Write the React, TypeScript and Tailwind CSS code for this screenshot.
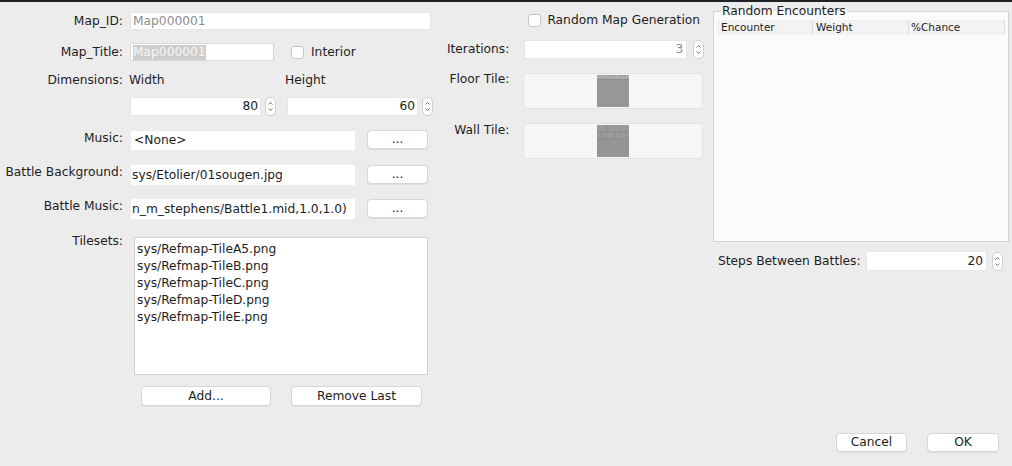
import React from "react";

const font = "font-['DejaVu_Sans',sans-serif] text-[12.25px] text-[#1d1d1d]";

function Stepper() {
  return (
    <div className="w-[11px] h-[19px] rounded-[5px] bg-white border border-[#cfcfcf] flex items-center justify-center shrink-0">
      <svg width="7" height="13" viewBox="0 0 7 13">
        <path d="M1.5 4.5 L3.5 2.5 L5.5 4.5" fill="none" stroke="#666" strokeWidth="0.9" />
        <path d="M1.5 8.5 L3.5 10.5 L5.5 8.5" fill="none" stroke="#666" strokeWidth="0.9" />
      </svg>
    </div>
  );
}

function Btn({ label, w }: { label: string; w: string }) {
  return (
    <div
      className={`${w} h-[19px] rounded-[4px] bg-white border border-[#d6d6d6] shadow-[0_1px_0_rgba(0,0,0,0.06)] flex items-center justify-center leading-none`}
    >
      {label}
    </div>
  );
}

function Checkbox() {
  return <div className="w-[13px] h-[13px] rounded-[3px] bg-white border border-[#c6c6c6] shrink-0" />;
}

function FloorTile() {
  return (
    <svg width="32" height="32" viewBox="0 0 32 32">
      <rect width="32" height="32" fill="#979797" />
      <rect y="0" width="32" height="4" fill="#a4a4a4" />
      <path d="M0 2 H4 M6 2 H10 M12 3 H16 M18 2 H22 M24 3 H28 M29 2 H32" stroke="#bdbdbd" strokeWidth="1" />
      <rect y="4" width="32" height="1" fill="#8f8f8f" />
    </svg>
  );
}

function WallTile() {
  return (
    <svg width="32" height="32" viewBox="0 0 32 32">
      <rect width="32" height="32" fill="#959595" />
      <rect width="32" height="14" fill="#9a9a9a" />
      <path d="M0 7 H32 M0 14 H32 M10 0 V7 M24 0 V7 M5 7 V14 M18 7 V14 M29 7 V14" stroke="#8a8a8a" strokeWidth="1" />
    </svg>
  );
}

export default function App() {
  return (
    <div className={`w-[1012px] h-[466px] bg-[#ececec] border-t-2 border-[#1f2327] flex flex-col ${font}`}>
      <div className="flex h-[431px]">
        {/* Left column */}
        <div className="w-[440px] flex flex-col pt-[10px]">
          <div className="flex items-center h-[18px]">
            <div className="w-[123px] text-right">Map_ID:</div>
            <div className="ml-[7px] w-[301px] h-[18px] bg-white border border-[#e6e6e6] pl-[2px] flex items-center text-[#8e8e8e]">
              Map000001
            </div>
          </div>
          <div className="flex items-center h-[18px] mt-[13px]">
            <div className="w-[123px] text-right">Map_Title:</div>
            <div className="ml-[7px] w-[144px] h-[18px] bg-white border border-[#d9d9d9] pl-[2px] flex items-center">
              <span className="bg-[#cdcdcd] text-[#f6f6f6] leading-[15px]">Map000001</span>
            </div>
            <div className="ml-[17px]">
              <Checkbox />
            </div>
            <div className="ml-[7px]">Interior</div>
          </div>
          <div className="flex items-center h-[15px] mt-[12px]">
            <div className="w-[123px] text-right">Dimensions:</div>
            <div className="ml-[6px] w-[156px]">Width</div>
            <div>Height</div>
          </div>
          <div className="flex items-center h-[19px] mt-[9px] pl-[130px]">
            <div className="w-[131px] h-[19px] bg-white border border-[#e6e6e6] pr-[2px] flex items-center justify-end">80</div>
            <div className="ml-[4px]">
              <Stepper />
            </div>
            <div className="ml-[11px] w-[131px] h-[19px] bg-white border border-[#e6e6e6] pr-[2px] flex items-center justify-end">60</div>
            <div className="ml-[4px]">
              <Stepper />
            </div>
          </div>
          <div className="flex items-start mt-[14px]">
            <div className="w-[123px] text-right -mt-[1px]">Music:</div>
            <div className="ml-[7px] w-[226px] h-[21px] bg-white border border-[#ececec] pl-[3px] flex items-center">&lt;None&gt;</div>
            <div className="ml-[11px]">
              <Btn label="..." w="w-[61px]" />
            </div>
          </div>
          <div className="flex items-start mt-[13px]">
            <div className="w-[123px] text-right -mt-[1px]">Battle Background:</div>
            <div className="ml-[7px] w-[226px] h-[22px] bg-white border border-[#ececec] pl-[1px] flex items-center">sys/Etolier/01sougen.jpg</div>
            <div className="ml-[11px] mt-[1px]">
              <Btn label="..." w="w-[61px]" />
            </div>
          </div>
          <div className="flex items-start mt-[12px]">
            <div className="w-[123px] text-right -mt-[1px]">Battle Music:</div>
            <div className="ml-[7px] w-[226px] h-[22px] bg-white border border-[#ececec] pl-[1px] flex items-center whitespace-nowrap overflow-hidden">
              n_m_stephens/Battle1.mid,1.0,1.0)
            </div>
            <div className="ml-[11px] mt-[1px]">
              <Btn label="..." w="w-[61px]" />
            </div>
          </div>
          <div className="flex items-start mt-[17px]">
            <div className="w-[123px] text-right -mt-[5px]">Tilesets:</div>
            <div className="ml-[11px] w-[294px] h-[138px] bg-white border border-[#cfcfcf] pl-[2px] pt-[3px] flex flex-col">
              {["sys/Refmap-TileA5.png", "sys/Refmap-TileB.png", "sys/Refmap-TileC.png", "sys/Refmap-TileD.png", "sys/Refmap-TileE.png"].map((t) => (
                <div key={t} className="h-[17px] leading-[17px]">
                  {t}
                </div>
              ))}
            </div>
          </div>
          <div className="flex mt-[11px] pl-[141px] gap-[20px]">
            <Btn label="Add..." w="w-[130px] h-[20px]" />
            <Btn label="Remove Last" w="w-[131px] h-[20px]" />
          </div>
        </div>

        {/* Middle column */}
        <div className="w-[270px] flex flex-col pt-[11px]">
          <div className="flex items-center h-[15px] pl-[89px]">
            <Checkbox />
            <div className="ml-[6px]">Random Map Generation</div>
          </div>
          <div className="flex items-center mt-[12px] h-[19px]">
            <div className="w-[70px] text-right -mt-[1px]">Iterations:</div>
            <div className="ml-[15px] w-[163px] h-[19px] bg-white border border-[#e6e6e6] pr-[3px] flex items-center justify-end text-[#8e8e8e]">3</div>
            <div className="ml-[6px]">
              <Stepper />
            </div>
          </div>
          <div className="flex items-start mt-[14px]">
            <div className="w-[70px] text-right -mt-[3px]">Floor Tile:</div>
            <div className="ml-[14px] w-[180px] h-[36px] rounded-[4px] bg-[#f6f6f6] border border-[#e2e2e2] flex justify-center pt-[1px]">
              <FloorTile />
            </div>
          </div>
          <div className="flex items-start mt-[14px]">
            <div className="w-[70px] text-right -mt-[2px]">Wall Tile:</div>
            <div className="ml-[14px] w-[180px] h-[36px] rounded-[4px] bg-[#f6f6f6] border border-[#e2e2e2] flex justify-center pt-[1px]">
              <WallTile />
            </div>
          </div>
        </div>

        {/* Right column */}
        <div className="flex-1 flex flex-col pl-[4px] pr-[3px] pt-[2px]">
          <fieldset className="w-[296px] h-[238px] border border-[#d4d4d4] bg-[#fbfbfb] px-[3px] pb-[2px]">
            <legend className="ml-[3px] px-[2px] leading-[14px]">Random Encounters</legend>
            <div className="flex h-[15px] bg-[#f3f3f3] text-[10.5px] leading-[15px] mt-[2px]">
              <div className="w-[96px] pl-[4px] border-r border-[#dcdcdc]">Encounter</div>
              <div className="w-[96px] pl-[3px] border-r border-[#dcdcdc]">Weight</div>
              <div className="w-[96px] pl-[2px] border-r border-[#dcdcdc]">%Chance</div>
            </div>
          </fieldset>
          <div className="flex items-center mt-[9px] h-[20px]">
            <div className="pl-[5px] w-[153px]">Steps Between Battles:</div>
            <div className="w-[121px] h-[20px] bg-white border border-[#e6e6e6] pr-[3px] flex items-center justify-end">20</div>
            <div className="ml-[5px]">
              <Stepper />
            </div>
          </div>
        </div>
      </div>
      <div className="flex justify-end gap-[20px] pr-[13px]">
        <Btn label="Cancel" w="w-[71px]" />
        <Btn label="OK" w="w-[72px]" />
      </div>
    </div>
  );
}
